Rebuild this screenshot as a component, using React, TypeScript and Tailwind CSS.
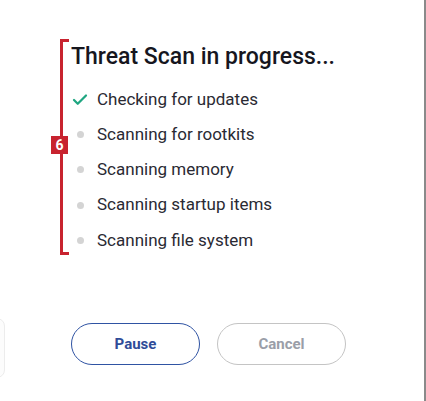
import { Check } from "lucide-react";

const steps = [
  { label: "Checking for updates", done: true },
  { label: "Scanning for rootkits", done: false },
  { label: "Scanning memory", done: false },
  { label: "Scanning startup items", done: false },
  { label: "Scanning file system", done: false },
];

export default function App() {
  return (
    <div
      className="relative w-[426px] h-[401px] bg-white overflow-hidden border-r-2 border-[#8a8a8a]"
      style={{ fontFamily: "Roboto, 'Liberation Sans', sans-serif" }}
    >
      {/* faint card edge on the left */}
      <div className="absolute left-[-20px] top-[318px] w-[25px] h-[60px] rounded-lg border border-[#ececec] bg-[#fcfcfc]" />

      <div className="relative pl-[71px] pt-[43px]">
        {/* annotation bracket */}
        <div className="absolute left-[60px] top-[39px] w-[9px] h-[216px] border-l-[3px] border-y-[3px] border-[#c8232f]" />
        <div className="absolute left-[51px] top-[136px] w-[17px] h-[18px] bg-[#c8232f] text-white text-[14px] font-bold leading-[18px] text-center">
          6
        </div>

        <h1 className="text-[23px] leading-[28px] font-medium text-[#16161e]">
          Threat Scan in progress...
        </h1>

        <ul className="mt-[11px] flex flex-col">
          {steps.map((s) => (
            <li key={s.label} className="flex items-center h-[35.2px]">
              <span className="w-[18px] flex justify-center">
                {s.done ? (
                  <Check className="w-[20px] h-[20px] text-[#1fa681]" strokeWidth={3} />
                ) : (
                  <span className="w-[7px] h-[7px] rounded-full bg-[#d4d4d4]" />
                )}
              </span>
              <span className="ml-[8px] text-[17px] text-[#2a2a33]">{s.label}</span>
            </li>
          ))}
        </ul>

        <div className="mt-[65px] flex gap-[17px]">
          <button className="w-[129px] h-[42px] rounded-full border-[1.5px] border-[#2f53a3] text-[#2f4c98] text-[15px] font-bold">
            Pause
          </button>
          <button className="w-[129px] h-[42px] rounded-full border-[1.5px] border-[#c4c4c4] text-[#9a9ea8] text-[15px] font-bold">
            Cancel
          </button>
        </div>
      </div>
    </div>
  );
}
